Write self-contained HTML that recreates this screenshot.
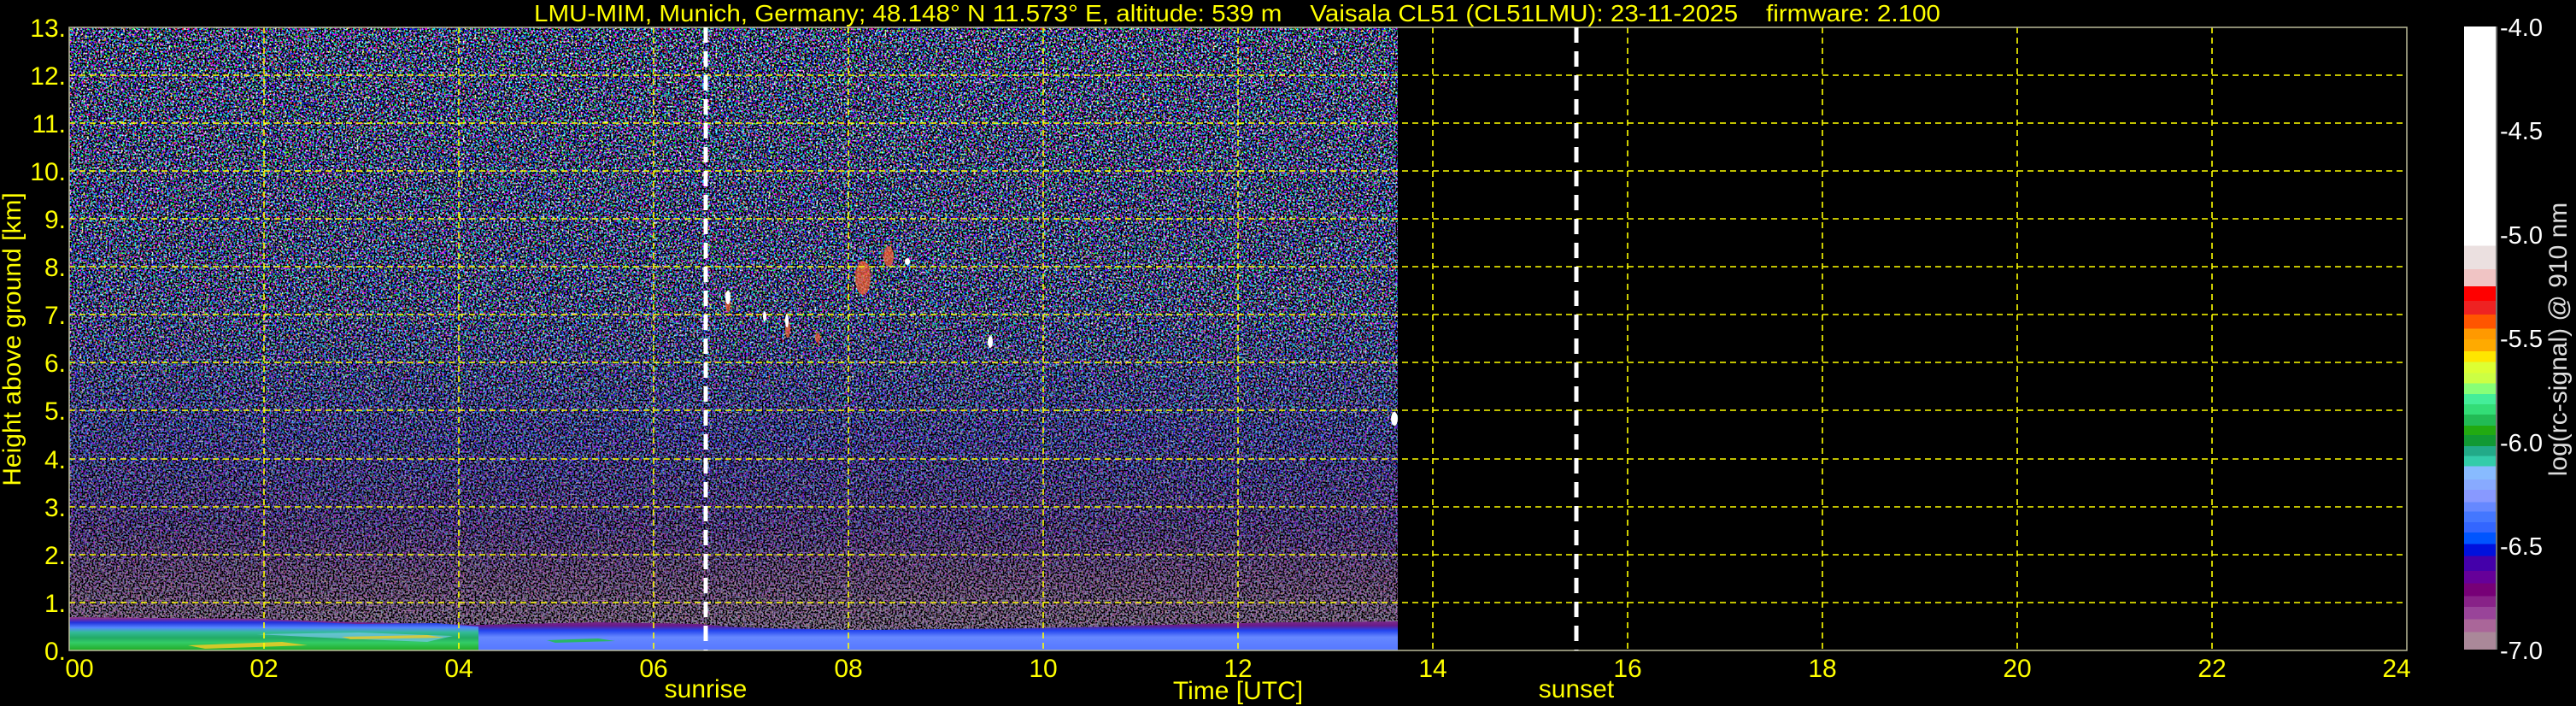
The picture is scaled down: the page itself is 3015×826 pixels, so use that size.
<!DOCTYPE html>
<html><head><meta charset="utf-8">
<style>
html,body{margin:0;padding:0;background:#000;}
svg{display:block;}
text{font-family:"Liberation Sans","DejaVu Sans",sans-serif;}
</style></head>
<body>
<svg width="3015" height="826" viewBox="0 0 3015 826" xmlns="http://www.w3.org/2000/svg">
<defs>
  <filter id="nz" x="0" y="0" width="100%" height="100%" color-interpolation-filters="sRGB">
    <feTurbulence type="fractalNoise" baseFrequency="0.45" numOctaves="1" seed="7" result="t"/>
    <feColorMatrix in="t" type="matrix" values="6 0 0 0 -2.6  0 6 0 0 -2.5  0 0 6 0 -2.0  0 0 0 0 1"/>
  </filter>
  <filter id="blk" x="0" y="0" width="100%" height="100%" color-interpolation-filters="sRGB">
    <feTurbulence type="fractalNoise" baseFrequency="0.5" numOctaves="1" seed="3" result="t"/>
    <feColorMatrix in="t" type="matrix" values="0 0 0 0 0  0 0 0 0 0  0 0 0 0 0  8 0 0 0 -3.7"/>
  </filter>
  <linearGradient id="tint" x1="0" y1="0" x2="0" y2="1">
    <stop offset="0" stop-color="#4a55aa" stop-opacity="0"/>
    <stop offset="0.45" stop-color="#4a55bb" stop-opacity="0.15"/>
    <stop offset="0.65" stop-color="#4a3cc0" stop-opacity="0.45"/>
    <stop offset="0.80" stop-color="#6a3a9a" stop-opacity="0.6"/>
    <stop offset="0.88" stop-color="#8a5a90" stop-opacity="0.75"/>
    <stop offset="1" stop-color="#a08898" stop-opacity="0.85"/>
  </linearGradient>
  <linearGradient id="cb" x1="0" y1="0" x2="0" y2="1">
    <stop offset="0" stop-color="#fff"/><stop offset=".3516" stop-color="#fff"/>
    <stop offset=".3516" stop-color="#ebe0e0"/><stop offset=".3899" stop-color="#ebe0e0"/>
    <stop offset=".3899" stop-color="#f0c4c4"/><stop offset=".4173" stop-color="#f0c4c4"/>
    <stop offset=".4173" stop-color="#ff0000"/><stop offset=".4404" stop-color="#ff0000"/>
    <stop offset=".4404" stop-color="#ee2222"/><stop offset=".4621" stop-color="#ee2222"/>
    <stop offset=".4621" stop-color="#ff5500"/><stop offset=".4852" stop-color="#ff5500"/>
    <stop offset=".4852" stop-color="#ff9900"/><stop offset=".5018" stop-color="#ff9900"/>
    <stop offset=".5018" stop-color="#ffaa00"/><stop offset=".5213" stop-color="#ffaa00"/>
    <stop offset=".5213" stop-color="#ffe600"/><stop offset=".5386" stop-color="#ffe600"/>
    <stop offset=".5386" stop-color="#ddff33"/><stop offset=".5560" stop-color="#ddff33"/>
    <stop offset=".5560" stop-color="#ccff44"/><stop offset=".5726" stop-color="#ccff44"/>
    <stop offset=".5726" stop-color="#88ff77"/><stop offset=".5899" stop-color="#88ff77"/>
    <stop offset=".5899" stop-color="#44ee99"/><stop offset=".6065" stop-color="#44ee99"/>
    <stop offset=".6065" stop-color="#33dd77"/><stop offset=".6231" stop-color="#33dd77"/>
    <stop offset=".6231" stop-color="#22bb55"/><stop offset=".6404" stop-color="#22bb55"/>
    <stop offset=".6404" stop-color="#22aa11"/><stop offset=".6556" stop-color="#22aa11"/>
    <stop offset=".6556" stop-color="#119933"/><stop offset=".6736" stop-color="#119933"/>
    <stop offset=".6736" stop-color="#22aa88"/><stop offset=".6895" stop-color="#22aa88"/>
    <stop offset=".6895" stop-color="#33ccaa"/><stop offset=".7061" stop-color="#33ccaa"/>
    <stop offset=".7061" stop-color="#88bbff"/><stop offset=".7271" stop-color="#88bbff"/>
    <stop offset=".7271" stop-color="#88aaff"/><stop offset=".7437" stop-color="#88aaff"/>
    <stop offset=".7437" stop-color="#8899ff"/><stop offset=".7632" stop-color="#8899ff"/>
    <stop offset=".7632" stop-color="#6688ff"/><stop offset=".7783" stop-color="#6688ff"/>
    <stop offset=".7783" stop-color="#4477ff"/><stop offset=".7957" stop-color="#4477ff"/>
    <stop offset=".7957" stop-color="#3366ff"/><stop offset=".8123" stop-color="#3366ff"/>
    <stop offset=".8123" stop-color="#0055ff"/><stop offset=".8303" stop-color="#0055ff"/>
    <stop offset=".8303" stop-color="#0011dd"/><stop offset=".8498" stop-color="#0011dd"/>
    <stop offset=".8498" stop-color="#4400aa"/><stop offset=".8736" stop-color="#4400aa"/>
    <stop offset=".8736" stop-color="#660099"/><stop offset=".8939" stop-color="#660099"/>
    <stop offset=".8939" stop-color="#770077"/><stop offset=".9141" stop-color="#770077"/>
    <stop offset=".9141" stop-color="#882288"/><stop offset=".9314" stop-color="#882288"/>
    <stop offset=".9314" stop-color="#994499"/><stop offset=".9516" stop-color="#994499"/>
    <stop offset=".9516" stop-color="#aa6699"/><stop offset=".9718" stop-color="#aa6699"/>
    <stop offset=".9718" stop-color="#aa8899"/><stop offset="1" stop-color="#aa8899"/>
  </linearGradient>
  <linearGradient id="bl1" x1="0" y1="0" x2="0" y2="1">
    <stop offset="0" stop-color="#7a2a9a"/>
    <stop offset="0.12" stop-color="#2233dd"/>
    <stop offset="0.28" stop-color="#5588ff"/>
    <stop offset="0.42" stop-color="#33bb99"/>
    <stop offset="0.6" stop-color="#22aa66"/>
    <stop offset="0.75" stop-color="#33cc66"/>
    <stop offset="1" stop-color="#22aa22"/>
  </linearGradient>
  <linearGradient id="bl2" x1="0" y1="0" x2="0" y2="1">
    <stop offset="0" stop-color="#8a3a90"/>
    <stop offset="0.25" stop-color="#6a1a88"/>
    <stop offset="0.4" stop-color="#2244ee"/>
    <stop offset="0.6" stop-color="#6688ff"/>
    <stop offset="1" stop-color="#5577ff"/>
  </linearGradient>
  <clipPath id="dc"><rect x="81" y="32" width="1555" height="729"/></clipPath>
</defs>

<rect width="3015" height="826" fill="#000"/>

<!-- data area -->
<g clip-path="url(#dc)">
  <rect x="81" y="32" width="1555" height="729" filter="url(#nz)"/>
  <rect x="81" y="32" width="1555" height="729" fill="url(#tint)"/>
  <rect x="81" y="32" width="1555" height="729" filter="url(#blk)"/>
  <!-- boundary layer -->
  <path d="M81 722 L300 724 L420 728 L560 731 L700 728 L820 730 L850 733 L900 735 L1000 737 L1100 736 L1200 735 L1300 733 L1400 730 L1500 728 L1636 727 L1636 761 L81 761 Z" fill="url(#bl2)"/>
  <path d="M81 724 L200 724 L320 726 L420 730 L510 729 L560 733 L560 761 L81 761 Z" fill="url(#bl1)"/>
  <path d="M300 742 L420 740 L530 744 L500 751 L400 747 Z" fill="#88ccff" opacity="0.6"/>
  <path d="M220 755 L330 751 L360 755 L240 759 Z" fill="#ffcc22" opacity="0.8"/>
  <path d="M400 745 L500 743 L520 746 L410 748 Z" fill="#eecc22" opacity="0.8"/>
  <path d="M640 749 L700 747 L720 750 L650 752 Z" fill="#22bb55" opacity="0.9"/>
  <!-- clouds -->
  <g fill="#ff6633" opacity="0.7">
    <ellipse cx="852" cy="355" rx="3" ry="10"/>
    <ellipse cx="922" cy="385" rx="3" ry="10"/>
    <ellipse cx="1010" cy="325" rx="9" ry="20"/>
    <ellipse cx="1040" cy="300" rx="6" ry="12"/>
    <ellipse cx="957" cy="395" rx="3" ry="6"/>
  </g>
  <g fill="#fff">
    <ellipse cx="852" cy="348" rx="3" ry="8"/>
    <ellipse cx="895" cy="370" rx="2" ry="6"/>
    <ellipse cx="921" cy="375" rx="2" ry="8"/>
    <ellipse cx="1062" cy="306" rx="3" ry="4"/>
    <ellipse cx="1159" cy="400" rx="3" ry="7"/>
    <ellipse cx="1632" cy="490" rx="4" ry="8"/>
  </g>
</g>

<!-- grid -->
<g stroke="#ffff00" stroke-width="1.6" stroke-dasharray="7,5" fill="none">
  <path d="M81 705H2817M81 649H2817M81 593H2817M81 537H2817M81 480H2817M81 424H2817M81 368H2817M81 312H2817M81 256H2817M81 200H2817M81 144H2817M81 88H2817"/>
  <path d="M309 32V761M537 32V761M765 32V761M993 32V761M1221 32V761M1449 32V761M1677 32V761M1905 32V761M2133 32V761M2361 32V761M2589 32V761"/>
</g>
<rect x="81" y="32" width="2736" height="729" fill="none" stroke="#bbbb99" stroke-width="1.5"/>
<g stroke="#fff" stroke-width="5" stroke-dasharray="18,10">
  <path d="M826 32V761"/><path d="M1845 32V761"/>
</g>

<g fill="#ffff00" font-size="30" text-anchor="end">
  <text x="77" y="43">13.</text><text x="77" y="99">12.</text><text x="77" y="155">11.</text>
  <text x="77" y="211">10.</text><text x="77" y="267">9.</text><text x="77" y="323">8.</text>
  <text x="77" y="379">7.</text><text x="77" y="435">6.</text><text x="77" y="491">5.</text>
  <text x="77" y="548">4.</text><text x="77" y="604">3.</text><text x="77" y="660">2.</text>
  <text x="77" y="716">1.</text><text x="77" y="772">0.</text>
</g>
<g fill="#ffff00" font-size="30" text-anchor="middle">
  <text x="93" y="792">00</text><text x="309" y="792">02</text><text x="537" y="792">04</text>
  <text x="765" y="792">06</text><text x="993" y="792">08</text><text x="1221" y="792">10</text>
  <text x="1449" y="792">12</text><text x="1677" y="792">14</text><text x="1905" y="792">16</text>
  <text x="2133" y="792">18</text><text x="2361" y="792">20</text><text x="2589" y="792">22</text>
  <text x="2805" y="792">24</text>
  <text x="826" y="816">sunrise</text>
  <text x="1845" y="816">sunset</text>
  <text x="1449" y="818">Time [UTC]</text>
</g>
<text x="625" y="25" fill="#ffff00" font-size="28" textLength="1646" lengthAdjust="spacingAndGlyphs" xml:space="preserve">LMU-MIM, Munich, Germany; 48.148° N 11.573° E, altitude: 539 m    Vaisala CL51 (CL51LMU): 23-11-2025    firmware: 2.100</text>
<text transform="translate(24,397) rotate(-90)" fill="#ffff00" font-size="30" text-anchor="middle">Height above ground [km]</text>

<rect x="2884" y="31" width="37" height="729" fill="url(#cb)"/>
<path d="M2922 31V760" stroke="#999" stroke-width="1.5"/>
<g fill="#ffffff" font-size="29">
  <text x="2926" y="42">-4.0</text><text x="2926" y="163">-4.5</text><text x="2926" y="285">-5.0</text>
  <text x="2926" y="406">-5.5</text><text x="2926" y="528">-6.0</text><text x="2926" y="649">-6.5</text>
  <text x="2926" y="771">-7.0</text>
</g>
<text transform="translate(3004,397) rotate(-90)" fill="#ddd" font-size="30" text-anchor="middle">log(rc-signal) @ 910 nm</text>
</svg>
</body></html>
